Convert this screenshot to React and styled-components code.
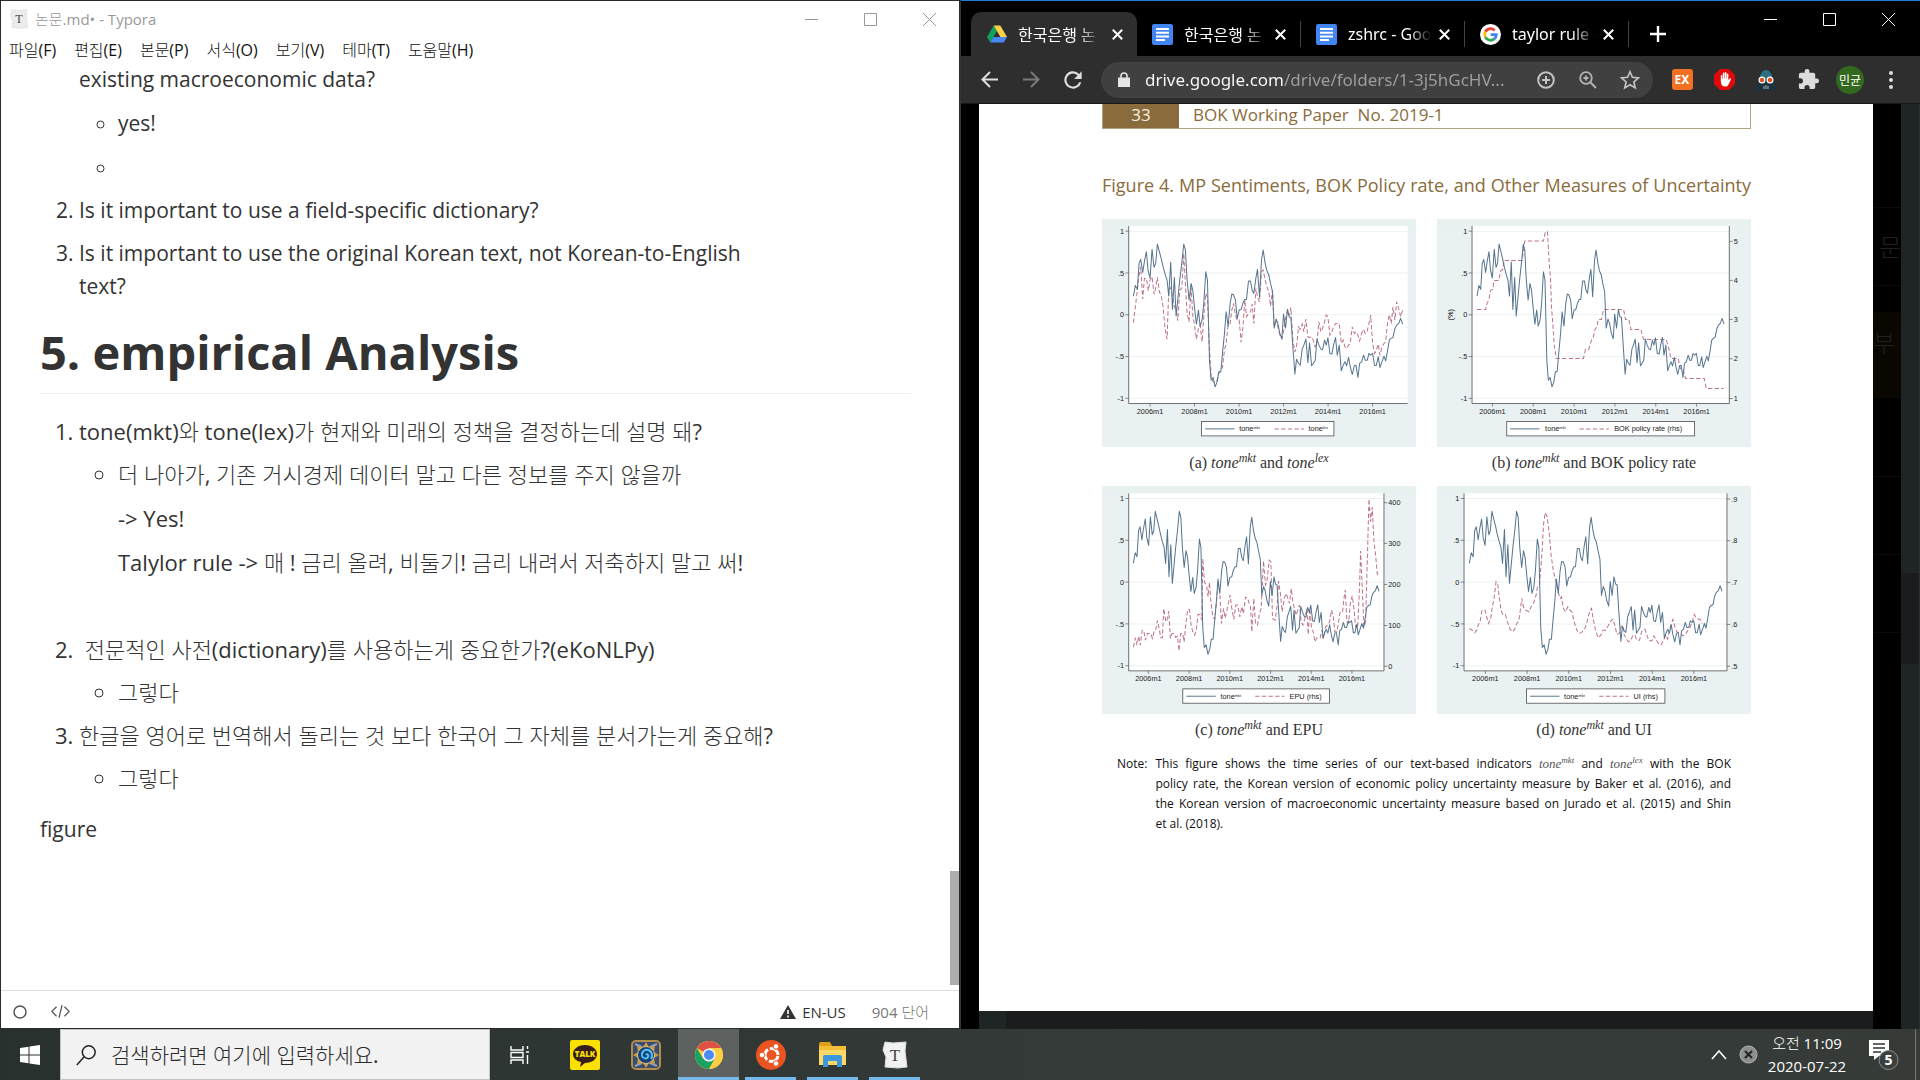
import React from "react";
import styled, { createGlobalStyle } from "styled-components";

const korean = `"Noto Sans CJK KR Light", "Noto Sans CJK KR DemiLight", "Noto Sans CJK KR"`;
const uiFont = `"Open Sans", ${korean}, sans-serif`;
const tabFont = `"Noto Sans", "Noto Sans CJK KR", sans-serif`;
const brown = "#8a6c3c";

const GlobalStyle = createGlobalStyle`
  *, *::before, *::after { box-sizing: border-box; }
  html, body { margin: 0; height: 100%; }
  body { background: #303735; font-family: ${uiFont}; overflow: hidden; }
  button, input { font: inherit; color: inherit; }
  h1, h2, p, ol, ul, figure { margin: 0; }
`;

const Desktop = styled.div`
  height: 100vh;
  display: flex;
  flex-direction: column;
`;

const Windows = styled.main`
  flex: 1;
  min-height: 0;
  display: grid;
  grid-template-columns: 1fr 1fr;
`;

const IconButton = styled.button`
  display: flex;
  align-items: center;
  justify-content: center;
  flex: none;
  width: ${(p) => p.$w || 42}px;
  height: ${(p) => p.$h || 36}px;
  padding: 0;
  border: 0;
  background: none;
  color: ${(p) => p.$color || "inherit"};
`;

/* ---------- Typora ---------- */

const Editor = styled.section`
  display: flex;
  flex-direction: column;
  min-height: 0;
  background: #fff;
  border: 1px solid #2b2b2d;
  color: #333;
`;

const TitleBar = styled.header`
  display: flex;
  align-items: center;
  height: 35px;
  padding-left: 8px;
  font-size: 15px;
  color: #999;
`;

const TitleText = styled.span`
  flex: 1;
  padding-left: 6px;
`;

const MenuBar = styled.nav`
  display: flex;
  align-items: center;
  gap: 18px;
  height: 27px;
  padding-left: 8px;
`;

const MenuItem = styled.button`
  padding: 0;
  border: 0;
  background: none;
  font-size: 16px;
  line-height: 20px;
  color: #111;
`;

const Scroller = styled.div`
  flex: 1;
  min-height: 0;
  display: flex;
  overflow: hidden;
`;

const Article = styled.article`
  flex: 1;
  padding: 0 39px;
  font-size: 21px;
  line-height: 33px;
`;

const List = styled.ol`
  padding-left: 39px;
  margin-bottom: ${(p) => p.$after || 0}px;
  font-size: ${(p) => p.$size || 21}px;
  > li + li { margin-top: 10px; }
`;

const Bullets = styled.ul`
  padding-left: 39px;
  margin-top: ${(p) => p.$gap || 10}px;
  list-style: circle;
  > li { min-height: 33px; }
  > li + li { margin-top: ${(p) => p.$gap || 10}px; }
`;

const Item = styled.li`
  list-style-type: ${(p) => (p.$unmarked ? "none" : "inherit")};
`;

const Narrow = styled.p`
  max-width: 680px;
`;

const Para = styled.p`
  min-height: 33px;
  & + & { margin-top: 11px; }
`;

const Heading = styled.h1`
  margin: 18px 0 21px;
  padding-bottom: 9px;
  border-bottom: 1px solid #eee;
  font-size: 47px;
  font-weight: 700;
  line-height: 63px;
`;

const Track = styled.div`
  width: 9px;
  display: flex;
  flex-direction: column;
  justify-content: flex-end;
  padding-bottom: 5px;
`;

const Thumb = styled.div`
  height: 114px;
  background: #adadad;
`;

const StatusBar = styled.footer`
  display: flex;
  align-items: center;
  height: 38px;
  padding: 4px 30px 0 0;
  border-top: 1px solid #ddd;
  font-size: 15px;
  color: #555;
`;

const StatusItem = styled.span`
  display: flex;
  align-items: center;
  gap: 6px;
  margin-left: ${(p) => (p.$push ? "auto" : "26px")};
  color: ${(p) => (p.$dark ? "#333" : "#777")};
`;

/* ---------- Browser ---------- */

const Browser = styled.section`
  display: flex;
  flex-direction: column;
  min-height: 0;
  min-width: 0;
  margin-left: 1px;
  border-top: 1px solid #1a7fd4;
  background: #000;
  color: #fff;
`;

const TabStrip = styled.div`
  display: flex;
  height: 55px;
  padding: 11px 0 0 10px;
`;

const Tab = styled.div`
  display: flex;
  align-items: center;
  width: ${(p) => (p.$active ? 166 : 164)}px;
  margin-right: ${(p) => (p.$active ? -1 : 0)}px;
  padding: 0 12px 0 16px;
  border-radius: 10px 10px 0 0;
  background: ${(p) => (p.$active ? "#2e2e2e" : "transparent")};
  font-family: ${tabFont};
  font-size: 16px;
`;

const TabLabel = styled.span`
  flex: 1;
  margin-left: 11px;
  white-space: nowrap;
  mask-image: linear-gradient(90deg, #000 60px, transparent 84px);
`;

const TabDivider = styled.i`
  align-self: center;
  width: 1px;
  height: 26px;
  margin-right: -1px;
  background: #444;
`;

const WindowButtons = styled.div`
  display: flex;
  margin-left: auto;
  margin-top: ${(p) => p.$lift || 0}px;
  margin-right: ${(p) => p.$inset || 0}px;
  align-self: flex-start;
`;

const Toolbar = styled.div`
  display: flex;
  align-items: center;
  height: 48px;
  padding: 0 9px 0 7px;
  background: #2e2e2e;
  border-bottom: 1px solid #1c1616;
`;

const Omnibox = styled.div`
  flex: 1;
  display: flex;
  align-items: center;
  height: 36px;
  min-width: 0;
  margin: 0 8px 0 7px;
  padding: 0 2px 0 17px;
  border-radius: 18px;
  background: #404040;
`;

const UrlInput = styled.input`
  flex: 1;
  min-width: 0;
  margin-left: 15px;
  padding: 0;
  border: 0;
  outline: 0;
  font-family: ${tabFont};
  font-size: 17px;
  color: transparent;
  background: linear-gradient(90deg, #fff 138px, #a0a0a0 138px);
  background-clip: text;
`;

const Badge = styled.span`
  display: grid;
  place-items: center;
  width: ${(p) => p.$size}px;
  height: ${(p) => p.$size}px;
  border-radius: ${(p) => p.$radius};
  background: ${(p) => p.$bg};
  font-family: ${tabFont};
  font-size: 12px;
  font-weight: ${(p) => p.$weight || 400};
  color: #fff;
`;

const Viewport = styled.div`
  flex: 1;
  min-height: 0;
  display: flex;
  padding-left: 18px;
`;

const PageColumn = styled.div`
  flex: 1;
  display: flex;
  flex-direction: column;
`;

const Sheet = styled.article`
  flex: 1;
  min-height: 0;
  padding: 0 122px 0 123px;
  background: #fff;
  color: #222;
`;

const Underpage = styled.div`
  height: 18px;
  background: #1b1c1e;
  border-left: 27px solid #1f2425;
`;

const PaperHeader = styled.header`
  display: flex;
  height: 25px;
  border: 1px solid #b5a27f;
  border-top: 0;
  color: ${brown};
  font-size: 17px;
  line-height: 22px;
`;

const PageNumber = styled.span`
  width: 76px;
  background: ${brown};
  color: #f5efe2;
  text-align: center;
`;

const PaperName = styled.span`
  padding-left: 14px;
  white-space: pre;
`;

const FigureTitle = styled.h2`
  margin: 42px 0 20px;
  font-size: 18px;
  font-weight: 400;
  line-height: 28px;
  color: ${brown};
  white-space: nowrap;
  text-align-last: justify;
`;

const Panels = styled.div`
  display: grid;
  grid-template-columns: 1fr 1fr;
  column-gap: 21px;
`;

const Panel = styled.figure`
  display: flex;
  flex-direction: column;
  > svg { width: 100%; display: block; }
`;

const Caption = styled.figcaption`
  height: 39px;
  line-height: 31px;
  text-align: center;
  font-family: "Liberation Serif", serif;
  font-size: 16px;
  color: #333;
  sup { font-size: 12px; line-height: 0; }
`;

const Note = styled.div`
  display: flex;
  gap: 8px;
  padding: 1px 20px 0 15px;
  font-size: 12px;
  line-height: 20px;
  color: #111;
  sup { font-size: 9px; line-height: 0; }
  em { font-family: "Liberation Serif", serif; font-size: 13px; color: #555; }
`;

const NoteBody = styled.div`
  flex: 1;
`;

const NoteLine = styled.div`
  white-space: nowrap;
  text-align-last: ${(p) => (p.$last ? "left" : "justify")};
`;

const Behind = styled.aside`
  width: 28px;
  padding-top: 103px;
  overflow: hidden;
  font-size: 24px;
  line-height: 60px;
  color: #202020;
`;

const BehindRow = styled.div`
  display: flex;
  align-items: ${(p) => (p.$amber ? "flex-start" : "center")};
  height: ${(p) => p.$h || 78}px;
  border-top: 1px solid ${(p) => (p.$amber ? "#0a0700" : "#0b0b0b")};
  background: ${(p) => (p.$amber ? "#0a0700" : "transparent")};
  white-space: nowrap;
`;

const DarkTrack = styled.div`
  width: 19px;
  padding-top: 469px;
  background: #1f2425;
  border-right: 1px solid #2e2e2e;
`;

const DarkThumb = styled.div`
  height: 91px;
  background: #1b1c1e;
`;

/* ---------- Taskbar ---------- */

const Taskbar = styled.footer`
  display: flex;
  height: 51px;
  background: linear-gradient(90deg, #29312f, #343b39 60%, #363b38);
  color: #fff;
`;

const SearchBox = styled.label`
  display: flex;
  align-items: center;
  gap: 14px;
  width: 430px;
  padding: 0 14px;
  background: #f2f2f2;
  border: 1px solid #c4c4c4;
  color: #222;
`;

const SearchInput = styled.input`
  flex: 1;
  min-width: 0;
  padding: 0;
  border: 0;
  outline: 0;
  background: none;
  font-size: 21px;
  &::placeholder { color: #2b2b2b; opacity: 1; }
`;

const TaskButton = styled.button`
  display: flex;
  align-items: center;
  justify-content: center;
  width: ${(p) => p.$w || 51}px;
  margin-right: ${(p) => (p.$w ? 0 : 11)}px;
  padding: 3px 0 0;
  border: 0;
  border-bottom: 3px solid ${(p) => (p.$open ? "#76b9ed" : "transparent")};
  background: ${(p) => (p.$active ? "#5d6260" : "none")};
`;

const Apps = styled.div`
  display: flex;
  padding-left: ${(p) => p.$lead}px;
`;

const Tray = styled.div`
  display: flex;
  align-items: center;
  margin-left: auto;
  padding-right: 4px;
`;

const Clock = styled.time`
  width: 88px;
  text-align: center;
  font-size: 15px;
  line-height: 23px;
`;

const Notices = styled.button`
  display: flex;
  width: 65px;
  padding: 0 0 0 18px;
  border: 0;
  border-right: 1px solid #777;
  height: 51px;
  align-items: center;
  background: none;
`;

/* ---------- Icons ---------- */

const Line = ({ size = 20, w = 2, color = "currentColor", children, box = 24 }) => (
  <svg width={size} height={size} viewBox={`0 0 ${box} ${box}`} fill="none" stroke={color} strokeWidth={w}>
    {children}
  </svg>
);

const MinIcon = () => <Line size={13} w={1} box={13}><path d="M0 6.5h13" /></Line>;
const MaxIcon = () => <Line size={13} w={1} box={13}><path d="M.5.5h12v12H.5z" /></Line>;
const CloseIcon = () => <Line size={13} w={1} box={13}><path d="M0 0l13 13M13 0L0 13" /></Line>;
const TabClose = () => <Line size={11} w={2} box={11}><path d="M.8.8l9.4 9.4M10.2.8L.8 10.2" /></Line>;

const DriveIcon = () => (
  <svg width="20" height="20" viewBox="0 0 20 20">
    <path d="M6.7 1.5L0 13l3.3 5.5L10 7z" fill="#11a05d" />
    <path d="M6.7 1.5h6.6L20 13h-6.6z" fill="#ffcf48" />
    <path d="M6.5 13H20l-3.3 5.5H3.3z" fill="#4688f4" />
  </svg>
);

const DocsIcon = () => (
  <svg width="21" height="21" viewBox="0 0 21 21">
    <rect width="21" height="21" rx="2" fill="#4285f4" />
    <path d="M4 5h13M4 8.7h13M4 12.4h13M4 16h9" stroke="#fff" strokeWidth="2" />
  </svg>
);

const GoogleIcon = () => (
  <svg width="21" height="21" viewBox="0 0 21 21" fill="none" strokeWidth="2.8">
    <circle cx="10.5" cy="10.5" r="10.5" fill="#fff" />
    <path d="M14.6 6.4A5.9 5.9 0 0 0 5.3 7.7" stroke="#ea4335" />
    <path d="M5.3 7.7a5.9 5.9 0 0 0 0 5.6" stroke="#fbbc05" />
    <path d="M5.3 13.3a5.9 5.9 0 0 0 9 1.6" stroke="#34a853" />
    <path d="M14.3 14.9a5.9 5.9 0 0 0 2-4.2h-5.6" stroke="#4285f4" />
  </svg>
);

const ChromeIcon = () => (
  <svg width="28" height="28" viewBox="0 0 28 28">
    <circle cx="14" cy="14" r="14" fill="#ffcd42" />
    <path d="M14 14L1.9 7A14 14 0 0 1 26.1 7H14z" fill="#de5145" />
    <path d="M1.9 7A14 14 0 0 0 14 28l6-10.5L14 14 8 17.5z" fill="#1aa260" />
    <path d="M14 7h12.1A14 14 0 0 1 14 28l6-10.5z" fill="#ffcd42" />
    <circle cx="14" cy="14" r="6.6" fill="#f4f4f4" />
    <circle cx="14" cy="14" r="5" fill="#4c8bf5" />
  </svg>
);

const TyporaIcon = ({ size, strong }) => (
  <svg width={size} height={size} viewBox="0 0 28 28">
    <path d="M4 1l8 1 13-1-1 9 2 16-9 1-13-1 1-10-3-7z" fill={strong ? "#f1f1f1" : "#ececec"} stroke="#ddd" />
    <text x="14" y="20" textAnchor="middle" fontFamily="Liberation Serif" fontSize="17" fill="#444">T</text>
  </svg>
);

const SearchIcon = () => (
  <Line size={22} w={1.6}><circle cx="15" cy="9" r="7" /><path d="M10 14l-8 9" /></Line>
);

const WindowsIcon = () => (
  <svg width="20" height="20" viewBox="0 0 20 20" fill="#fff">
    <path d="M0 3l8.5-1.3v7.8H0zM9.5 1.5L20 0v9.5H9.5zM0 10.5h8.5v7.8L0 17zM9.5 10.5H20V20L9.5 18.5z" />
  </svg>
);

const TaskViewIcon = () => (
  <Line size={22} w={1.4} box={22}>
    <path d="M2 2v4h12V2M2 20v-4h12v4M2 8.500h12v5H2zM18.500 2v3M18.500 11v9M17 8h3" />
  </Line>
);

const TalkIcon = () => (
  <svg width="30" height="30" viewBox="0 0 30 30">
    <rect width="30" height="30" rx="2" fill="#fae100" />
    <path d="M15 5c7 0 12 4 12 9s-5 9-12 9l-5 4 1-5c-5-1-8-4-8-8 0-5 5-9 12-9z" fill="#371d1e" />
    <text x="15" y="17" textAnchor="middle" fontSize="8" fontWeight="800" fontFamily="Open Sans" fill="#fae100">TALK</text>
  </svg>
);

const HearthIcon = () => (
  <svg width="30" height="30" viewBox="0 0 30 30" fill="none">
    <rect x="1" y="1" width="28" height="28" rx="4" fill="#3b4d6e" stroke="#b08d4a" strokeWidth="2" />
    <path d="M4 4l7 3M26 4l-7 3M4 26l7-3M26 26l-7-3" stroke="#8fa0b8" strokeWidth="2" />
    <path d="M15 2l3 5 6-1-1 6 5 3-5 3 1 6-6-1-3 5-3-5-6 1 1-6-5-3 5-3-1-6 6 1z" fill="#c59a4b" />
    <circle cx="15" cy="15" r="8.500" fill="#173f78" stroke="#e0bf74" />
    <path d="M15 15c1-2 3 0 2 2s-5 2-6-1 2-7 6-6 5 6 3 9" stroke="#4fc6f5" strokeWidth="2" />
  </svg>
);

const UbuntuIcon = () => (
  <svg width="30" height="30" viewBox="0 0 30 30" fill="none">
    <circle cx="15" cy="15" r="15" fill="#e95420" />
    <circle cx="15.500" cy="15" r="6.500" stroke="#fff" strokeWidth="3" strokeDasharray="11.600 2" strokeDashoffset="-1" />
    <g fill="#fff" stroke="#e95420"><circle cx="6" cy="15" r="2.800" /><circle cx="20" cy="6.500" r="2.800" /><circle cx="20" cy="23.500" r="2.800" /></g>
  </svg>
);

const FolderIcon = () => (
  <svg width="29" height="26" viewBox="0 0 29 26">
    <path d="M1 2q0-2 2-2h9l2 4h-13z" fill="#dca017" />
    <path d="M1 4h27v19H1z" fill="#ffd767" />
    <path d="M1 4h27v4H1z" fill="#f4bd36" />
    <path d="M5 25V15q0-2 2-2h15q2 0 2 2v10h-5v-6h-9v6z" fill="#3c97dd" />
  </svg>
);

const DarthIcon = () => (
  <svg width="22" height="20" viewBox="0 0 22 20">
    <path d="M0 20l4-9C4 4 7 0 11 0s7 4 7 11l4 9z" fill="#1b3440" />
    <path d="M4.500 9C5 3 8 0 11 0s6 3 6.500 9z" fill="#2c7183" />
    <circle cx="7" cy="10" r="2.900" fill="#d9531e" stroke="#fff" strokeWidth="1.200" />
    <circle cx="15" cy="10" r="2.900" fill="#d9531e" stroke="#fff" strokeWidth="1.200" />
    <path d="M9 19v-3M11 19v-4M13 19v-3" stroke="#aaa" />
  </svg>
);

const StopIcon = () => (
  <svg width="21" height="21" viewBox="0 0 21 21">
    <path d="M6 0h9l6 6v9l-6 6H6l-6-6V6z" fill="#e10a0a" />
    <path d="M6.800 12V6.500q1-1 1.500 0V10h.5V4q1-1 1.600 0v5.500h.4V3.500q1-1 1.600 0v6h.4V5q1-1 1.600 0v6l1.600-1.600q1.400-.4 1 .8L14.300 16q-1 1.500-3 1.500Q6.800 17.500 6.800 12z" fill="#fff" />
  </svg>
);

const PuzzleIcon = () => (
  <svg width="23" height="23" viewBox="0 0 24 24" fill="#dcdcdc">
    <path d="M20.500 11H19V7c0-1.100-.9-2-2-2h-4V3.500a2.500 2.500 0 0 0-5 0V5H4c-1.100 0-2 .9-2 2v3.800h1.500a2.700 2.700 0 0 1 0 5.400H2V20c0 1.100.9 2 2 2h3.800v-1.500a2.700 2.700 0 0 1 5.400 0V22H17c1.100 0 2-.9 2-2v-4h1.500a2.500 2.500 0 0 0 0-5z" />
  </svg>
);

const ReloadIcon = () => (
  <svg width="26" height="26" viewBox="0 0 24 24" fill="#dedede">
    <path d="M17.650 6.350A8 8 0 1 0 19.730 14h-2.080A6 6 0 1 1 12 6c1.660 0 3.140.69 4.220 1.780L13 11h7V4l-2.350 2.350z" />
  </svg>
);

const LockIcon = () => (
  <svg width="12" height="15" viewBox="0 0 12 15">
    <path d="M0 5.500h12V15H0z" fill="#e4e4e4" />
    <path d="M3 6V4a3 3 0 0 1 6 0v2" fill="none" stroke="#e4e4e4" strokeWidth="1.600" />
  </svg>
);

const NoticeIcon = () => (
  <svg width="33" height="32" viewBox="0 0 33 32">
    <path d="M0 1h20v16H10l-5 4v-4H0z" fill="#fff" />
    <path d="M4 5h12M4 9h12M4 13h8" stroke="#333" strokeWidth="1.400" />
    <circle cx="19.500" cy="21" r="9.500" fill="#3b403e" stroke="#8b8f8d" />
    <text x="19.500" y="26" textAnchor="middle" fontSize="14" fontWeight="700" fontFamily="Open Sans" fill="#fff">5</text>
  </svg>
);

/* ---------- Charts ---------- */

const TONE = "130,288 136,256 142,268 147,190 152,178 158,217 163,185 169,155 174,210 180,234 186,148 192,202 197,190 202,132 208,155 214,178 219,200 225,222 231,240 236,288 242,186 247,328 253,232 258,348 264,290 269,240 275,190 281,132 286,150 291,240 297,300 303,250 308,270 314,330 319,372 325,330 330,378 336,360 341,310 347,215 352,240 358,480 363,540 369,532 375,560 381,545 386,515 392,515 397,460 403,400 408,335 414,378 420,310 425,282 430,284 436,300 441,356 447,330 453,328 458,310 464,298 469,298 475,243 481,243 486,270 491,280 497,235 502,208 508,290 514,180 519,150 525,190 530,212 536,225 541,250 547,275 552,384 558,357 563,370 569,400 575,416 580,342 586,384 592,328 597,350 602,352 608,440 614,522 619,477 625,490 630,495 636,447 641,435 647,417 653,488 658,428 664,497 669,490 675,480 680,417 686,435 692,447 697,449 703,420 708,435 713,413 719,460 725,462 730,435 736,412 741,465 747,435 753,512 759,495 764,485 769,497 775,472 780,500 786,523 792,497 797,495 803,532 808,490 814,485 820,465 825,480 831,480 836,460 841,465 847,460 853,496 858,496 864,470 869,502 875,485 881,468 886,482 892,450 897,420 903,414 908,412 914,385 919,375 925,370 931,355 937,372"
  .split(" ")
  .map((p) => p.split(",").map(Number));

const toneLine = (x0, x1, dy) =>
  TONE.map(([x, y]) => `${(x0 + ((x - 130) * (x1 - x0)) / 807).toFixed(1)},${y + dy}`).join(" ");

const CHARTS = [
  {
    id: "a", origin: [36, 57], plot: [116, 952], dy: 0, tone: [130, 937], tick0: 180, step: 133.4,
    right: [], box: [334, 731], legend: [345, 447, 553, 655], name: "tone", sup: "lex",
    caption: <>(a) <i>tone<sup>mkt</sup></i> and <i>tone<sup>lex</sup></i></>,
    line: "130,368 136,320 142,270 147,225 152,200 158,297 163,235 169,235 175,272 180,240 186,230 192,283 197,262 202,232 208,275 214,290 219,320 225,385 231,417 236,270 242,262 247,290 253,320 258,330 263,362 269,270 275,265 281,160 286,255 291,340 297,365 303,262 308,345 314,380 319,417 325,385 330,375 336,425 341,350 347,280 352,290 358,440 363,530 369,545 375,548 381,540 386,520 392,510 397,500 403,450 408,430 414,372 420,370 425,330 430,310 436,345 441,360 447,360 453,426 458,385 464,300 469,350 475,340 481,335 486,312 491,370 497,265 502,290 508,305 514,215 519,210 525,240 530,260 536,275 541,318 547,270 552,380 558,357 563,380 569,405 575,416 580,395 586,355 592,330 597,345 602,322 608,420 614,455 619,440 625,380 630,388 636,372 641,395 647,357 653,410 658,412 664,410 669,420 675,440 680,430 686,365 692,395 697,385 703,365 708,345 713,350 719,405 725,395 730,380 736,370 741,370 747,372 753,430 759,420 764,440 769,445 775,435 780,430 786,380 792,400 797,395 803,405 808,422 814,400 820,388 825,400 831,392 836,370 841,345 847,430 853,460 858,450 864,432 869,465 875,440 881,430 886,425 892,365 897,345 903,370 908,320 914,360 919,305 925,325 931,350 937,330",
  },
  {
    id: "b", origin: [21, 57], plot: [126, 897], dy: 0, tone: [141, 881], tick0: 187, step: 122.4, unit: "(%)",
    right: [["5", 124], ["4", 241], ["3", 358], ["2", 476], ["1", 595]], box: [230, 793], legend: [240, 345, 448, 552], name: "BOK policy rate (rhs)",
    caption: <>(b) <i>tone<sup>mkt</sup></i> and BOK policy rate</>,
    line: "141,328 167,328 170,312 176,300 182,270 188,268 192,241 206,241 212,212 218,208 222,181 276,181 284,123 340,123 346,95 352,95 358,200 361,230 364,320 368,370 372,430 378,475 460,475 466,447 476,447 484,420 490,410 494,390 500,380 504,358 514,358 520,328 580,328 586,358 596,358 602,388 632,388 640,418 708,418 716,447 722,475 744,475 750,505 758,505 766,535 822,535 828,565 880,565",
  },
  {
    id: "c", origin: [36, 33], plot: [116, 881], dy: -23, tone: [130, 866], tick0: 175, step: 122,
    right: [["400", 83], ["300", 205], ["200", 328], ["100", 451], ["0", 573]], box: [278, 718], legend: [289, 391, 495, 598], name: "EPU (rhs)",
    caption: <>(c) <i>tone<sup>mkt</sup></i> and EPU</>,
    line: "130,516 136,488 141,510 146,483 151,510 156,467 161,465 166,495 172,475 182,475 187,490 192,470 197,465 202,436 207,458 212,488 217,488 221,400 227,440 231,435 236,408 241,490 246,475 252,475 257,487 262,483 267,527 272,475 278,475 282,500 288,440 293,403 298,403 303,450 308,470 314,480 319,460 324,418 330,418 335,435 338,250 343,320 350,335 354,365 358,322 362,375 368,425 374,432 380,370 384,320 389,355 394,445 400,400 405,428 412,398 420,360 425,400 431,433 437,390 443,390 449,425 455,395 460,415 466,366 472,368 477,385 481,395 485,470 491,370 496,445 502,450 508,415 513,400 520,258 526,330 530,322 537,255 542,260 547,430 555,435 561,390 565,318 570,350 576,410 582,370 588,355 593,370 598,385 603,340 608,380 614,405 618,420 624,400 628,390 633,440 638,450 644,430 650,400 654,478 659,400 664,460 669,470 674,500 680,488 690,488 695,465 700,490 706,455 712,450 718,440 724,405 729,425 734,470 740,470 745,440 750,410 757,410 761,370 765,345 770,440 775,445 780,385 786,362 791,400 796,455 802,460 808,330 811,228 816,340 821,455 826,440 831,260 836,72 841,140 846,97 851,200 856,240 861,297 866,288",
  },
  {
    id: "d", origin: [21, 33], plot: [102, 890], dy: -23, tone: [118, 875], tick0: 166, step: 125,
    right: [[".9", 72], [".8", 197], [".7", 322], [".6", 448], [".5", 573]], box: [289, 704], legend: [300, 402, 507, 610], name: "UI (rhs)",
    caption: <>(d) <i>tone<sup>mkt</sup></i> and UI</>,
    line: "118,460 126,465 134,473 140,465 145,448 150,440 156,405 165,405 170,425 176,445 182,430 186,400 192,370 198,320 203,328 208,370 213,405 218,418 226,418 232,440 240,462 247,470 254,462 260,445 266,438 270,410 275,370 280,395 286,405 297,410 303,395 310,385 318,360 322,335 328,330 332,280 336,230 340,150 345,113 351,125 357,170 363,240 370,290 378,320 384,350 390,370 394,365 400,400 406,410 413,395 420,405 426,412 432,440 440,465 447,475 456,470 465,458 472,435 478,410 484,400 489,430 496,465 504,488 512,480 518,465 526,465 534,452 540,440 548,432 554,450 560,478 567,475 573,455 577,450 582,480 588,490 594,500 602,495 608,480 614,480 620,495 628,495 634,470 644,462 650,480 656,497 665,497 671,482 678,495 685,505 692,510 700,495 706,480 712,492 720,455 728,433 734,455 740,470 750,475 758,482 766,478 772,467 780,455 786,440 792,418 798,430 810,433 816,445",
  },
];

function Chart({ c }) {
  const [ox, oy] = c.origin;
  const [l, r] = c.plot;
  const top = 78 + c.dy;
  const bottom = 610 + c.dy;
  const ys = [1, 0.5, 0, -0.5, -1].map((v) => [String(v).replace("0.", "."), 344 + c.dy - v * 250.5]);
  const [s1, t1, s2, t2] = c.legend;
  const ly = 686 + c.dy;
  return (
    <svg viewBox={`${ox} ${oy} 941 684`} fontFamily="Liberation Sans" fontSize="22" fill="#222" role="img" aria-label={`Chart ${c.id}`}>
      <rect x={ox} y={oy} width="941" height="684" fill="#eaf1f3" />
      <rect x={ox} y={oy} width="941" height="21" fill="#e7f2ef" />
      <rect x={l} y={top} width={r - l} height={bottom - top} fill="#fff" />
      {ys.map(([t, y]) => (
        <g key={t}>
          <path d={`M${l} ${y}H${r}`} stroke="#edf2f2" strokeWidth="3" />
          <path d={`M${l - 10} ${y}H${l}`} stroke="#555" strokeWidth="2" />
          <text x={l - 14} y={y + 8} textAnchor="end">{t}</text>
        </g>
      ))}
      <path d={`M${l} ${top}V${bottom}H${r}${c.right.length ? `V${top}` : ""}`} fill="none" stroke="#555" strokeWidth="2.500" />
      {c.right.map(([t, y]) => (
        <g key={t}>
          <path d={`M${r} ${y}h10`} stroke="#555" strokeWidth="2" />
          <text x={r + 13} y={y + 8}>{t}</text>
        </g>
      ))}
      {[0, 1, 2, 3, 4, 5].map((i) => (
        <g key={i}>
          <path d={`M${c.tick0 + i * c.step} ${bottom}v9`} stroke="#555" strokeWidth="2" />
          <text x={c.tick0 + i * c.step} y={bottom + 31} textAnchor="middle">{2006 + i * 2}m1</text>
        </g>
      ))}
      {c.unit && <text transform="translate(70 344) rotate(-90)" textAnchor="middle">{c.unit}</text>}
      <polyline points={c.line} fill="none" stroke="#bd7387" strokeWidth="3" strokeDasharray="13 7" />
      <polyline points={toneLine(c.tone[0], c.tone[1], c.dy)} fill="none" stroke="#55748e" strokeWidth="3" strokeLinejoin="round" />
      <rect x={c.box[0]} y={ly - 22} width={c.box[1] - c.box[0]} height="43" fill="#fff" stroke="#555" strokeWidth="2.500" />
      <path d={`M${s1} ${ly}h88`} stroke="#55748e" strokeWidth="3" />
      <path d={`M${s2} ${ly}h88`} stroke="#bd7387" strokeWidth="3" strokeDasharray="13 7" />
      <text x={t1} y={ly + 7}>tone<tspan dy="-6" fontSize="12">mkt</tspan></text>
      <text x={t2} y={ly + 7}>{c.name}{c.sup && <tspan dy="-6" fontSize="12">{c.sup}</tspan>}</text>
    </svg>
  );
}

/* ---------- Screens ---------- */

const Controls = ({ w, h, lift, inset }) => (
  <WindowButtons $lift={lift} $inset={inset}>
    <IconButton $w={w} $h={h} aria-label="Minimize"><MinIcon /></IconButton>
    <IconButton $w={w} $h={h} aria-label="Maximize"><MaxIcon /></IconButton>
    <IconButton $w={w} $h={h} aria-label="Close"><CloseIcon /></IconButton>
  </WindowButtons>
);

function TyporaWindow() {
  return (
    <Editor>
      <TitleBar>
        <TyporaIcon size={20} />
        <TitleText>논문.md• - Typora</TitleText>
        <Controls w={59} h={36} />
      </TitleBar>
      <MenuBar>
        {["파일(F)", "편집(E)", "본문(P)", "서식(O)", "보기(V)", "테마(T)", "도움말(H)"].map((m) => (
          <MenuItem key={m}>{m}</MenuItem>
        ))}
      </MenuBar>
      <Scroller>
        <Article>
          <List>
            <Item $unmarked>
              existing macroeconomic data?
              <Bullets $gap={11}>
                <li>yes!</li>
                <li />
              </Bullets>
            </Item>
            <Item>Is it important to use a field-specific dictionary?</Item>
            <Item><Narrow>Is it important to use the original Korean text, not Korean-to-English text?</Narrow></Item>
          </List>
          <Heading>5. empirical Analysis</Heading>
          <List $after={18} $size={22}>
            <Item>
              tone(mkt)와 tone(lex)가 현재와 미래의 정책을 결정하는데 설명 돼?
              <Bullets>
                <li>
                  <Para>더 나아가, 기존 거시경제 데이터 말고 다른 정보를 주지 않을까</Para>
                  <Para>-&gt; Yes!</Para>
                  <Para>Talylor rule -&gt; 매 ! 금리 올려, 비둘기! 금리 내려서 저축하지 말고 써!</Para>
                  <Para />
                </li>
              </Bullets>
            </Item>
            <Item>
              &nbsp;전문적인 사전(dictionary)를 사용하는게 중요한가?(eKoNLPy)
              <Bullets><li>그렇다</li></Bullets>
            </Item>
            <Item>
              한글을 영어로 번역해서 돌리는 것 보다 한국어 그 자체를 분서가는게 중요해?
              <Bullets><li>그렇다</li></Bullets>
            </Item>
          </List>
          <p>figure</p>
        </Article>
        <Track><Thumb /></Track>
      </Scroller>
      <StatusBar>
        <IconButton $w={38} aria-label="Sidebar"><Line size={14} w={1.5} box={14}><circle cx="7" cy="7" r="6" /></Line></IconButton>
        <IconButton $w={42} aria-label="Source code"><Line size={19} w={1.6}><path d="M7 6l-6 6 6 6M17 6l6 6-6 6M14 4l-4 16" /></Line></IconButton>
        <StatusItem $push $dark>
          <svg width="16" height="14" viewBox="0 0 16 14"><path d="M8 0l8 14H0z" fill="#333" /><path d="M8 5v4M8 10.500v2" stroke="#fff" strokeWidth="1.600" /></svg>
          EN-US
        </StatusItem>
        <StatusItem>904 단어</StatusItem>
      </StatusBar>
    </Editor>
  );
}

const TABS = [
  { icon: <DriveIcon />, label: "한국은행 논", active: true },
  { icon: <DocsIcon />, label: "한국은행 논" },
  { icon: <DocsIcon />, label: "zshrc - Goo" },
  { icon: <GoogleIcon />, label: "taylor rule -" },
];

function ChromeWindow() {
  return (
    <Browser>
      <TabStrip>
        {TABS.map((t, i) => (
          <React.Fragment key={i}>
            <Tab $active={t.active}>
              {t.icon}
              <TabLabel>{t.label}</TabLabel>
              <IconButton $w={16} $h={20} aria-label="Close tab"><TabClose /></IconButton>
            </Tab>
            {i > 0 && <TabDivider />}
          </React.Fragment>
        ))}
        <IconButton $w={60} $h={44} aria-label="New tab"><Line size={16} w={2.4} box={16}><path d="M8 0v16M0 8h16" /></Line></IconButton>
        <Controls w={59} h={36} lift={-11} inset={2} />
      </TabStrip>
      <Toolbar>
        <IconButton aria-label="Back" $color="#dedede"><Line size={17} w={2} box={17}><path d="M17 8.500H1.500M9 1L1.500 8.500 9 16" /></Line></IconButton>
        <IconButton aria-label="Forward" $color="#7a7a7a"><Line size={17} w={2} box={17}><path d="M0 8.500h15.500M8 1l7.500 7.500L8 16" /></Line></IconButton>
        <IconButton aria-label="Reload"><ReloadIcon /></IconButton>
        <Omnibox>
          <LockIcon />
          <UrlInput aria-label="Address" defaultValue="drive.google.com/drive/folders/1-3j5hGcHV..." />
          <IconButton aria-label="Install" $color="#c4c4c4"><Line size={18} w={2} box={18}><circle cx="9" cy="9" r="7.800" /><path d="M9 5v8M5 9h8" /></Line></IconButton>
          <IconButton aria-label="Zoom" $color="#b4b4b4"><Line size={18} w={1.8} box={18}><circle cx="7" cy="7" r="5.800" /><path d="M11.500 11.500l5.500 5.500M7 4.500v5M4.500 7h5" /></Line></IconButton>
          <IconButton aria-label="Bookmark" $color="#c4c4c4"><Line size={22} w={1.8}><path d="M12 3l2.600 6.100 6.600.6-5 4.400 1.500 6.500L12 17.100l-5.700 3.500 1.500-6.500-5-4.400 6.600-.6z" /></Line></IconButton>
        </Omnibox>
        <IconButton aria-label="EX extension"><Badge $size={21} $radius="3px" $bg="#f36f21" $weight={700}>EX</Badge></IconButton>
        <IconButton aria-label="Ad blocker"><StopIcon /></IconButton>
        <IconButton aria-label="Dark reader"><DarthIcon /></IconButton>
        <IconButton aria-label="Extensions"><PuzzleIcon /></IconButton>
        <IconButton aria-label="Profile"><Badge $size={28} $radius="50%" $bg="#33691e">민균</Badge></IconButton>
        <IconButton $w={40} aria-label="Menu"><svg width="4" height="18" viewBox="0 0 4 18" fill="#dedede"><circle cx="2" cy="2" r="2" /><circle cx="2" cy="9" r="2" /><circle cx="2" cy="16" r="2" /></svg></IconButton>
      </Toolbar>
      <Viewport>
        <PageColumn>
          <Sheet>
            <PaperHeader>
              <PageNumber>33</PageNumber>
              <PaperName>BOK Working Paper  No. 2019-1</PaperName>
            </PaperHeader>
            <FigureTitle>Figure 4. MP Sentiments, BOK Policy rate, and Other Measures of Uncertainty</FigureTitle>
            <Panels>
              {CHARTS.map((c) => (
                <Panel key={c.id}>
                  <Chart c={c} />
                  <Caption>{c.caption}</Caption>
                </Panel>
              ))}
            </Panels>
            <Note>
              <span>Note:</span>
              <NoteBody>
                <NoteLine>This figure shows the time series of our text-based indicators <em>tone<sup>mkt</sup></em> and <em>tone<sup>lex</sup></em> with the BOK</NoteLine>
                <NoteLine>policy rate, the Korean version of economic policy uncertainty measure by Baker et al. (2016), and</NoteLine>
                <NoteLine>the Korean version of macroeconomic uncertainty measure based on Jurado et al. (2015) and Shin</NoteLine>
                <NoteLine $last>et al. (2018).</NoteLine>
              </NoteBody>
            </Note>
          </Sheet>
          <Underpage />
        </PageColumn>
        <Behind>
          <BehindRow>&nbsp;문</BehindRow>
          <BehindRow $h={27} />
          <BehindRow $amber $h={85}>부</BehindRow>
          <BehindRow $h={79} />
          <BehindRow />
          <BehindRow />
          <BehindRow />
        </Behind>
        <DarkTrack><DarkThumb /></DarkTrack>
      </Viewport>
    </Browser>
  );
}

function BottomBar() {
  return (
    <Taskbar>
      <IconButton $w={60} $h={51} aria-label="Start"><WindowsIcon /></IconButton>
      <SearchBox>
        <SearchIcon />
        <SearchInput aria-label="Search" placeholder="검색하려면 여기에 입력하세요." />
      </SearchBox>
      <Apps $lead={4}>
        <TaskButton aria-label="Task view"><TaskViewIcon /></TaskButton>
        <TaskButton $w={57} aria-label="KakaoTalk"><TalkIcon /></TaskButton>
        <TaskButton $w={65} aria-label="Hearthstone"><HearthIcon /></TaskButton>
        <TaskButton $w={61} $open $active aria-label="Chrome"><ChromeIcon /></TaskButton>
      </Apps>
      <Apps $lead={6}>
        <TaskButton $open aria-label="Ubuntu"><UbuntuIcon /></TaskButton>
        <TaskButton $open aria-label="Explorer"><FolderIcon /></TaskButton>
        <TaskButton $open aria-label="Typora"><TyporaIcon size={28} strong /></TaskButton>
      </Apps>
      <Tray>
        <IconButton $w={28} aria-label="Hidden icons"><Line size={16} w={1.5} box={16}><path d="M1 12l7-8 7 8" /></Line></IconButton>
        <IconButton $w={30} aria-label="Status">
          <svg width="19" height="19" viewBox="0 0 19 19"><circle cx="9.500" cy="9.500" r="8.500" fill="#8a8f8d" stroke="#b5b8b6" /><path d="M6 6l7 7M13 6l-7 7" stroke="#222" strokeWidth="2" /></svg>
        </IconButton>
        <Clock>오전 11:09<br />2020-07-22</Clock>
        <Notices aria-label="Notifications"><NoticeIcon /></Notices>
      </Tray>
    </Taskbar>
  );
}

export default function App() {
  return (
    <>
      <GlobalStyle />
      <Desktop>
        <Windows>
          <TyporaWindow />
          <ChromeWindow />
        </Windows>
        <BottomBar />
      </Desktop>
    </>
  );
}
